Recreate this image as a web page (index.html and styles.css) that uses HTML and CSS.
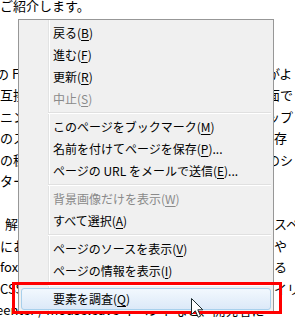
FILE: index.html
```html
<!DOCTYPE html>
<html lang="ja">

<head>
    <meta charset="UTF-8">
    <title>要素を調査</title>
    <link rel="stylesheet" href="styles.css">
</head>

<body>
    <!-- 背景のページ本文 -->
    <div class="page">
        <p class="para first">
            <span class="line"><span>ご紹介します。</span></span>
        </p>
        <p class="para">
            <span class="line"><span class="shift">の Firefox</span><span class="tail">がよ</span></span>
            <span class="line"><span>互換</span><span class="tail">面で</span></span>
            <span class="line"><span>ニン</span><span class="tail">ップ</span></span>
            <span class="line"><span>のス</span><span class="tail back">保存</span></span>
            <span class="line"><span>の秘</span><span class="tail">のシ</span></span>
            <span class="line"><span>ター</span><span class="tail"></span></span>
        </p>
        <p class="para">
            <span class="line"><span class="indent">解</span><span class="tail edge">スペ</span></span>
            <span class="line"><span>にお</span><span class="tail edge">や</span></span>
            <span class="line"><span>fox</span><span class="tail edge">る</span></span>
            <span class="line"><span class="cut">CSS 3D Transform、WebGL のアクセラレーション</span><span class="tail edge">イリ</span></span>
            <span class="line"><span class="shift">eenter / mouseleave イベントなど、開発者に</span></span>
        </p>
    </div>

    <!-- 右クリックメニュー -->
    <div class="context_menu">
        <div class="item">戻る(<u>B</u>)</div>
        <div class="item">進む(<u>F</u>)</div>
        <div class="item">更新(<u>R</u>)</div>
        <div class="item disabled">中止(<u>S</u>)</div>
        <div class="sep"></div>
        <div class="item">このページをブックマーク(<u>M</u>)</div>
        <div class="item">名前を付けてページを保存(<u>P</u>)...</div>
        <div class="item">ページの URL をメールで送信(<u>E</u>)...</div>
        <div class="sep"></div>
        <div class="item disabled">背景画像だけを表示(<u>W</u>)</div>
        <div class="item">すべて選択(<u>A</u>)</div>
        <div class="sep"></div>
        <div class="item">ページのソースを表示(<u>V</u>)</div>
        <div class="item">ページの情報を表示(<u>I</u>)</div>
        <div class="sep"></div>
        <div class="item active">要素を調査(<u>Q</u>)</div>
    </div>

    <!-- 注目の赤枠 -->
    <div class="mark"></div>

    <!-- マウスカーソル -->
    <svg class="cursor" width="13" height="21" viewBox="0 0 13 21">
        <path d="M0.5 0.5 L0.5 16.5 L4.3 12.8 L7.2 19.2 L9.6 18.1 L6.8 11.8 L11.8 11.8 Z" fill="#fff" stroke="#1b2b2e" stroke-width="1" stroke-linejoin="round"/>
    </svg>
</body>

</html>
```

FILE: styles.css
```css
* {
    margin: 0;
    padding: 0;
}

body {
    width: 295px;
    height: 331px;
    overflow: hidden;
    position: relative;
    background-color: #fff;
    font-family: "Noto Sans CJK JP", "Noto Sans", sans-serif;
    color: #000;
}

/* 背景のページ */
.page {
    font-size: 13px;
    line-height: 21.5px;
}
.para {
    margin-top: 21.5px;
}
.para.first {
    margin-top: -5px;
    margin-bottom: 46px;
}
.line {
    display: flex;
    justify-content: space-between;
    white-space: nowrap;
    height: 21.5px;
}
.shift {
    margin-left: -4px;
}
.indent {
    padding-left: 5px;
}
.cut {
    flex: 1;
    overflow: hidden;
}
.tail {
    width: 28px;
    flex-shrink: 0;
}
.tail.back {
    width: 34px;
}
.tail.edge {
    width: 21px;
}

/* コンテキストメニュー */
.context_menu {
    position: absolute;
    left: 18px;
    top: 19px;
    width: 256px;
    height: 293px;
    box-sizing: border-box;
    border: 1px solid #979797;
    padding: 2px;
    background:
        linear-gradient(to right, transparent 29px, #e2e3e3 29px, #e2e3e3 30px, #fff 30px, #fff 31px, transparent 31px),
        #f0f0f0;
    font-size: 12px;
}
.item {
    height: 22px;
    line-height: 22px;
    padding-left: 32px;
    white-space: nowrap;
    box-sizing: border-box;
}
.item u {
    text-underline-offset: 2px;
}
.item.disabled {
    color: #8a8a8a;
}
.item.active {
    border: 1px solid #a8d0ec;
    border-radius: 3px;
    background: linear-gradient(#f2f8fe, #dce9f8);
    padding-left: 31px;
    line-height: 20px;
}
.sep {
    height: 6px;
    margin-left: 27px;
    background: linear-gradient(transparent 2px, #e0e0e0 2px, #e0e0e0 3px, #fff 3px, #fff 4px, transparent 4px);
}

/* 赤枠 */
.mark {
    position: absolute;
    left: 12px;
    top: 282px;
    width: 270px;
    height: 32px;
    box-sizing: border-box;
    border: 3px solid #f00;
}

.cursor {
    position: absolute;
    left: 191px;
    top: 298px;
}
```
